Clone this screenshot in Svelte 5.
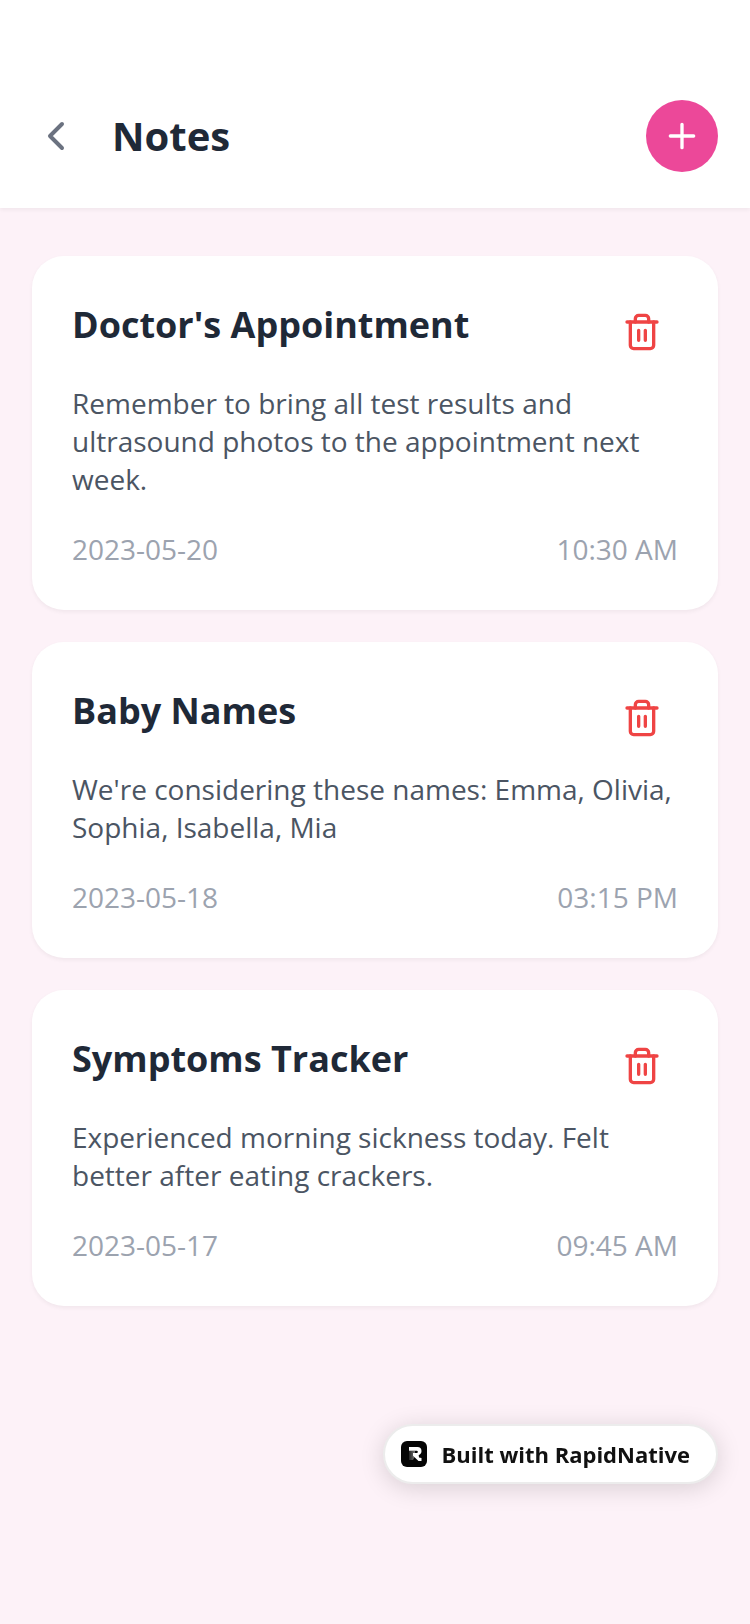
<script lang="ts">
  interface Note {
    id: number
    title: string
    content: string
    date: string
    time: string
  }

  let notes = $state<Note[]>([
    {
      id: 1,
      title: "Doctor's Appointment",
      content: 'Remember to bring all test results and ultrasound photos to the appointment next week.',
      date: '2023-05-20',
      time: '10:30 AM',
    },
    {
      id: 2,
      title: 'Baby Names',
      content: "We're considering these names: Emma, Olivia, Sophia, Isabella, Mia",
      date: '2023-05-18',
      time: '03:15 PM',
    },
    {
      id: 3,
      title: 'Symptoms Tracker',
      content: 'Experienced morning sickness today. Felt better after eating crackers.',
      date: '2023-05-17',
      time: '09:45 AM',
    },
  ])

  function removeNote(id: number) {
    notes = notes.filter((note) => note.id !== id)
  }
</script>

<div class="screen">
  <header class="header">
    <button class="header__back" type="button" aria-label="Back">
      <svg class="icon icon--large" viewBox="0 0 24 24" aria-hidden="true">
        <path d="m15 18-6-6 6-6" />
      </svg>
    </button>
    <h1 class="header__title">Notes</h1>
    <button class="header__add" type="button" aria-label="Add note">
      <svg class="icon" viewBox="0 0 24 24" aria-hidden="true">
        <path d="M5 12h14M12 5v14" />
      </svg>
    </button>
  </header>

  <main class="notes">
    {#each notes as note (note.id)}
      <article class="note">
        <div class="note__top">
          <h2 class="note__title">{note.title}</h2>
          <button
            class="note__delete"
            type="button"
            aria-label="Delete {note.title}"
            onclick={() => removeNote(note.id)}
          >
            <svg class="icon" viewBox="0 0 24 24" aria-hidden="true">
              <path d="M3 6h18" />
              <path d="M19 6v14a2 2 0 0 1-2 2H7a2 2 0 0 1-2-2V6" />
              <path d="M8 6V4a2 2 0 0 1 2-2h4a2 2 0 0 1 2 2v2" />
              <path d="M10 11v6M14 11v6" />
            </svg>
          </button>
        </div>
        <p class="note__content">{note.content}</p>
        <div class="note__meta">
          <span>{note.date}</span>
          <span>{note.time}</span>
        </div>
      </article>
    {/each}
  </main>

  <a class="badge" href="#rapidnative">
    <svg class="badge__logo" viewBox="0 0 26 26" aria-hidden="true">
      <defs>
        <linearGradient id="stem" x1="0" y1="0" x2="1" y2="0">
          <stop offset="0" stop-color="#222" />
          <stop offset="1" stop-color="#777" />
        </linearGradient>
      </defs>
      <rect width="26" height="26" rx="6" fill="#050505" />
      <path d="M8 10h6v5l-2 4H8z" fill="url(#stem)" />
      <path
        d="M8 6h8.500c2.500 0 4 1.600 4 4 0 2-1 3.500-2.800 4.100L18 16.500 20.500 17v3h-3L12 14.800V12h3.300c1 0 1.500-.4 1.500-1.100 0-.8-.5-1.100-1.500-1.100H8z"
        fill="#fff"
      />
    </svg>
    <span>Built with RapidNative</span>
  </a>
</div>

<style>
  :global(body) {
    background: #fdf2f8;
  }

  .screen {
    font-family: 'Open Sans', 'Noto Sans', sans-serif;
    color: #1f2937;
  }

  button {
    display: flex;
    flex-shrink: 0;
    padding: 0;
    border: none;
    background: none;
    cursor: pointer;
  }

  h1,
  h2,
  p {
    margin: 0;
  }

  .icon {
    width: 40px;
    height: 40px;
    fill: none;
    stroke: currentColor;
    stroke-width: 2;
    stroke-linecap: round;
    stroke-linejoin: round;
  }

  .icon--large {
    width: 48px;
    height: 48px;
  }

  /* Header */
  .header {
    display: flex;
    align-items: center;
    gap: 32px;
    padding: 100px 32px 36px;
    background: #fff;
    box-shadow: 0 2px 4px rgba(0, 0, 0, 0.05);
  }

  .header__back {
    color: #6b7280;
  }

  .header__title {
    flex: 1;
    font-size: 40px;
    line-height: 58px;
    font-weight: 700;
  }

  .header__add {
    padding: 16px;
    border-radius: 50%;
    color: #fff;
    background: #ec4899;
  }

  /* Notes list */
  .notes {
    display: flex;
    flex-direction: column;
    gap: 32px;
    padding: 48px 32px;
  }

  .note {
    padding: 40px 40px 42px;
    border-radius: 32px;
    background: #fff;
    box-shadow: 0 2px 4px rgba(0, 0, 0, 0.05);
  }

  .note__top {
    display: flex;
    align-items: flex-start;
    justify-content: space-between;
    margin-bottom: 16px;
  }

  .note__title {
    font-size: 36px;
    line-height: 58px;
    font-weight: 700;
  }

  .note__delete {
    padding: 16px;
    color: #ef4444;
  }

  .note__content {
    margin-bottom: 32px;
    font-size: 28px;
    line-height: 38px;
    color: #4b5563;
  }

  .note__meta {
    display: flex;
    justify-content: space-between;
    font-size: 28px;
    line-height: 38px;
    color: #9ca3af;
  }

  /* Floating badge */
  .badge {
    position: fixed;
    right: 32px;
    bottom: 140px;
    display: flex;
    align-items: center;
    gap: 14px;
    padding: 13px 26px 13px 16px;
    border: 2px solid #ececec;
    border-radius: 32px;
    font-size: 22px;
    line-height: 30px;
    font-weight: 700;
    color: #111;
    text-decoration: none;
    background: #fff;
    box-shadow: 0 4px 24px rgba(0, 0, 0, 0.15);
  }

  .badge__logo {
    width: 26px;
    height: 26px;
  }
</style>
